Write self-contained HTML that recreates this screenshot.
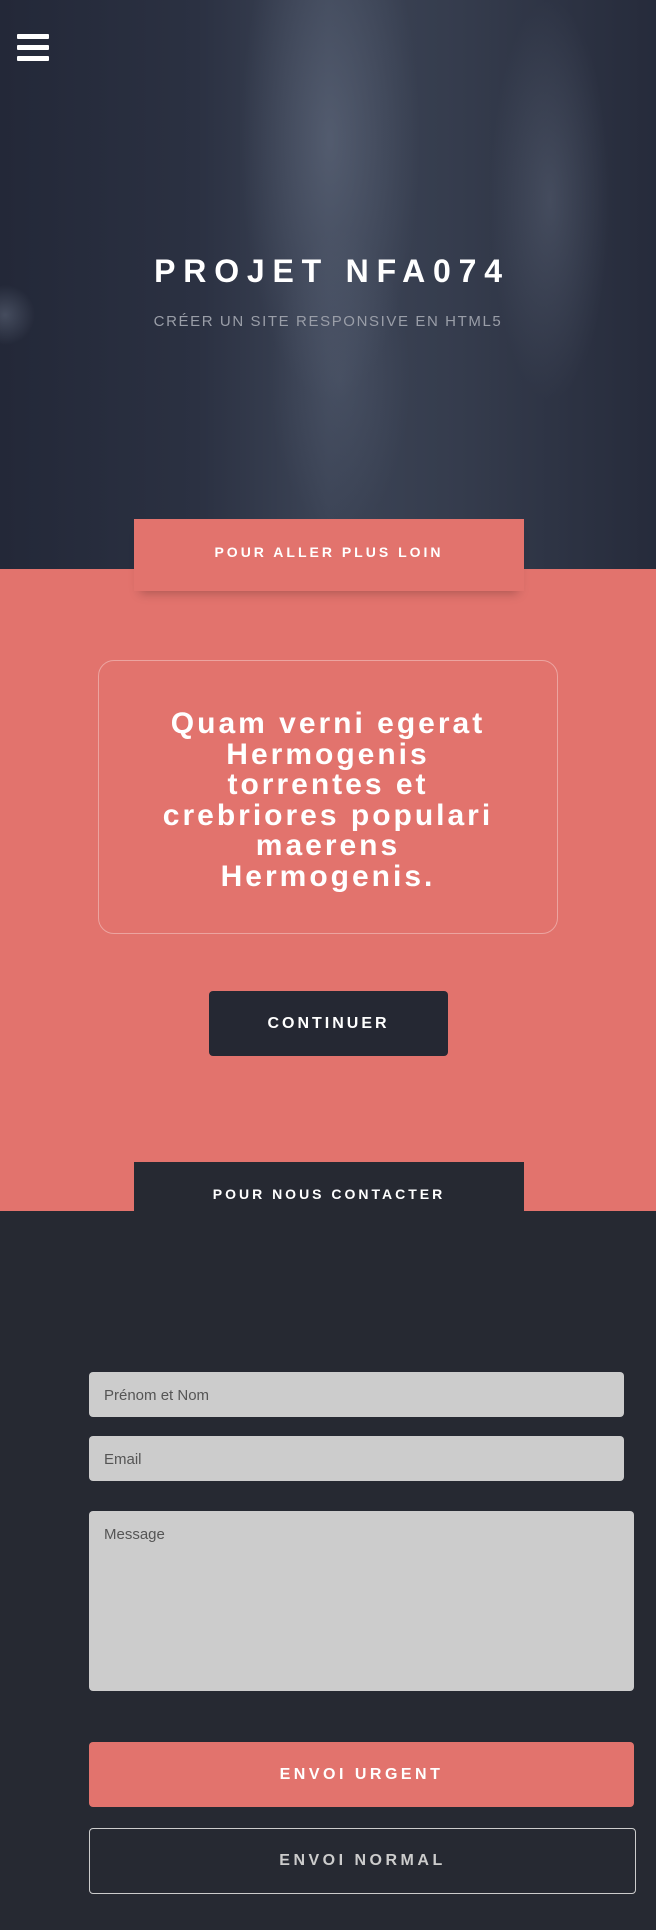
<!DOCTYPE html>
<html><head><meta charset="utf-8"><style>
*{margin:0;padding:0;box-sizing:border-box}
body{width:656px;height:1930px;background:#262932;font-family:"Liberation Sans",Arial,sans-serif;position:relative;overflow:hidden}
.hero{position:absolute;left:0;top:0;width:656px;height:569px;background:
radial-gradient(ellipse 90px 260px at 330px 140px,rgba(110,120,140,.45),transparent),
radial-gradient(ellipse 60px 200px at 550px 200px,rgba(110,120,140,.35),transparent),
radial-gradient(ellipse 70px 150px at 340px 380px,rgba(90,100,120,.35),transparent),
radial-gradient(ellipse 30px 30px at 5px 315px,rgba(120,130,150,.4),transparent),
linear-gradient(90deg,#232838 0%,#2b3142 30%,#3c4456 50%,#353c4d 70%,#262b3b 100%)}
.burger{position:absolute;left:17px;top:34px;width:32px}
.burger i{display:block;height:5px;background:#fff;margin-bottom:6px;border-radius:1px}
.title{position:absolute;top:253px;left:0;width:656px;text-align:center;color:#fff;font-weight:bold;font-size:32px;letter-spacing:7.8px;padding-left:8px}
.sub{position:absolute;top:313px;left:0;width:656px;text-align:center;color:#9a9ea8;font-size:15px;letter-spacing:1.6px}
.coral{position:absolute;left:0;top:569px;width:656px;height:642px;background:#e2736d}
.tab1{position:absolute;left:134px;top:519px;width:390px;height:72px;background:#e2736d;color:#fff;font-weight:bold;font-size:14px;letter-spacing:3px;text-align:center;padding-top:25px;box-shadow:0 8px 10px -6px rgba(0,0,0,.25)}
.box{position:absolute;left:98px;top:660px;width:460px;height:274px;border:1px solid rgba(255,255,255,.35);border-radius:16px;color:#fff;font-weight:bold;font-size:30px;line-height:30.5px;letter-spacing:3px;text-align:center;padding:48px 20px 0}
.cont{position:absolute;left:209px;top:991px;width:239px;height:65px;background:#252833;border-radius:4px;color:#fff;font-weight:bold;font-size:16px;letter-spacing:3px;text-align:center;line-height:65px}
.tab2{position:absolute;left:134px;top:1162px;width:390px;height:50px;background:#262932;color:#fff;font-weight:bold;font-size:14px;letter-spacing:3px;text-align:center;padding-top:24px}
.in{position:absolute;left:89px;width:535px;height:45px;background:#cccccc;border-radius:4px;color:#555;font-size:15px;padding:15px 0 0 15px}
.ta{position:absolute;left:89px;top:1511px;width:545px;height:180px;background:#cccccc;border-radius:4px;color:#555;font-size:15px;padding:15px}
.b1{position:absolute;left:89px;top:1742px;width:545px;height:65px;background:#e2736d;border-radius:4px;color:#fff;font-weight:bold;font-size:16px;letter-spacing:3.5px;text-align:center;line-height:65px}
.b2{position:absolute;left:89px;top:1828px;width:547px;height:66px;border:1px solid #ccc;border-radius:4px;color:#ccc;font-weight:bold;font-size:16px;letter-spacing:3.5px;text-align:center;line-height:64px}
</style></head><body>
<div class="hero"></div>
<div class="burger"><i></i><i></i><i></i></div>
<div class="title">PROJET NFA074</div>
<div class="sub">CRÉER UN SITE RESPONSIVE EN HTML5</div>
<div class="coral"></div>
<div class="tab1">POUR ALLER PLUS LOIN</div>
<div class="box">Quam verni egerat<br>Hermogenis<br>torrentes et<br>crebriores populari<br>maerens<br>Hermogenis.</div>
<div class="cont">CONTINUER</div>
<div class="tab2">POUR NOUS CONTACTER</div>
<div class="in" style="top:1372px">Prénom et Nom</div>
<div class="in" style="top:1436px">Email</div>
<div class="ta">Message</div>
<div class="b1">ENVOI URGENT</div>
<div class="b2">ENVOI NORMAL</div>
</body></html>
